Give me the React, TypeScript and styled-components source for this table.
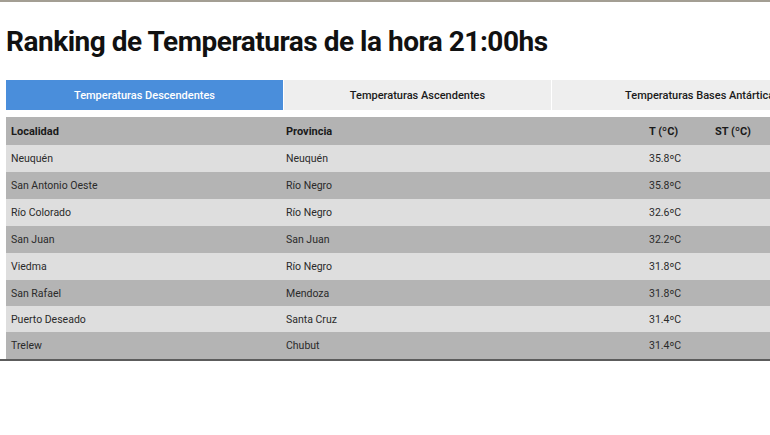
import { FC } from 'react'
import styled, { createGlobalStyle } from 'styled-components'

const GlobalStyle = createGlobalStyle`
  html, body {
    margin: 0;
    padding: 0;
    background: #ffffff;
    font-family: Roboto, "Liberation Sans", Arial, sans-serif;
    color: #222222;
    overflow: hidden;
  }
`

const Page = styled.div`
  width: 770px;
  height: 435px;
  border-top: 2px solid #a39e93;
  box-sizing: border-box;
  overflow: hidden;
`

const Content = styled.div`
  padding: 0 0 0 6px;
  border-bottom: 2px solid #5c5c5c;
`

const Title = styled.h1`
  margin: 0;
  padding: 22px 0 0;
  height: 78px;
  box-sizing: border-box;
  font-size: 28px;
  font-weight: 700;
  letter-spacing: -0.48px;
  color: #111111;
  line-height: 36px;
`

const Tabs = styled.div`
  display: flex;
  width: 880px;
  height: 30px;
  margin-bottom: 7px;
`

const Tab = styled.div<{ $active?: boolean; $w: number }>`
  flex: 0 0 ${p => p.$w}px;
  display: flex;
  align-items: center;
  justify-content: center;
  font-size: 11px;
  font-weight: 500;
  background: ${p => (p.$active ? '#4a8edb' : '#eeeeee')};
  color: ${p => (p.$active ? '#ffffff' : '#1a1a1a')};
  border-right: 1px solid #ffffff;
  box-sizing: border-box;
`

const Table = styled.table`
  width: 880px;
  table-layout: fixed;
  border-collapse: collapse;
  font-size: 10.5px;
`

const HeadCell = styled.th<{ $w?: number }>`
  width: ${p => (p.$w ? `${p.$w}px` : 'auto')};
  height: 28px;
  padding: 0 0 0 5px;
  text-align: left;
  font-size: 11px;
  font-weight: 700;
  color: #1a1a1a;
  background: #b3b3b3;
`

const Row = styled.tr<{ $dark: boolean; $h: number }>`
  height: ${p => p.$h}px;
  background: ${p => (p.$dark ? '#b4b4b4' : '#dedede')};
`

const Cell = styled.td`
  padding: 0 0 0 5px;
  color: #2a2a2a;
  white-space: nowrap;
`

const rows = [
  ['Neuquén', 'Neuquén', '35.8ºC', 27],
  ['San Antonio Oeste', 'Río Negro', '35.8ºC', 27],
  ['Río Colorado', 'Río Negro', '32.6ºC', 27],
  ['San Juan', 'San Juan', '32.2ºC', 27],
  ['Viedma', 'Río Negro', '31.8ºC', 27],
  ['San Rafael', 'Mendoza', '31.8ºC', 26],
  ['Puerto Deseado', 'Santa Cruz', '31.4ºC', 26],
  ['Trelew', 'Chubut', '31.4ºC', 27],
] as const

const App: FC = () => (
  <Page>
    <GlobalStyle />
    <Content>
      <Title>Ranking de Temperaturas de la hora 21:00hs</Title>
      <Tabs>
        <Tab $active $w={278}>Temperaturas Descendentes</Tab>
        <Tab $w={268}>Temperaturas Ascendentes</Tab>
        <Tab $w={302}>Temperaturas Bases Antárticas</Tab>
      </Tabs>
      <Table>
        <thead>
          <tr>
            <HeadCell $w={270}>Localidad</HeadCell>
            <HeadCell $w={358}>Provincia</HeadCell>
            <HeadCell $w={61}>T (ºC)</HeadCell>
            <HeadCell>ST (ºC)</HeadCell>
          </tr>
        </thead>
        <tbody>
          {rows.map((r, i) => (
            <Row key={r[0]} $dark={i % 2 === 1} $h={r[3]}>
              <Cell>{r[0]}</Cell>
              <Cell>{r[1]}</Cell>
              <Cell>{r[2]}</Cell>
              <Cell></Cell>
            </Row>
          ))}
        </tbody>
      </Table>
    </Content>
  </Page>
)

export default App
